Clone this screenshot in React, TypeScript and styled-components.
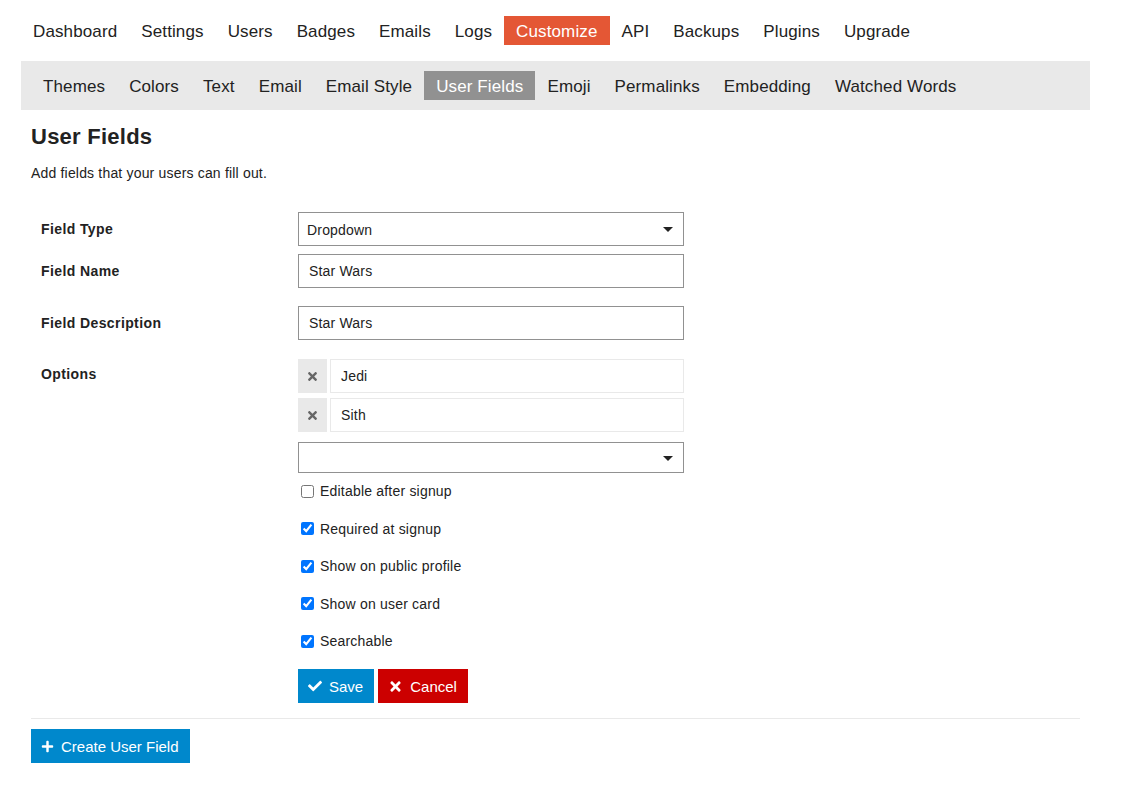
import { createGlobalStyle } from 'styled-components'
import styled from 'styled-components'
import { FaCheck, FaTimes, FaPlus } from 'react-icons/fa'

const GlobalStyle = createGlobalStyle`
  body {
    margin: 0;
    background: #fff;
    color: #222;
    font-family: "Liberation Sans", Arial, sans-serif;
  }
`

const Page = styled.div`
  width: 1069px;
  margin-left: 21px;
  padding-top: 16px;
`

const TopNav = styled.nav`
  display: flex;
`

const TopItem = styled.a<{ $active?: boolean }>`
  display: block;
  padding: 0 12px;
  height: 29px;
  line-height: 31px;
  font-size: 17px;
  letter-spacing: 0.12px;
  color: ${(p) => (p.$active ? '#fff' : '#222')};
  background: ${(p) => (p.$active ? '#e45735' : 'transparent')};
`

const SubNav = styled.nav`
  display: flex;
  margin-top: 16px;
  padding: 10px;
  background: #e9e9e9;
`

const SubItem = styled.a<{ $active?: boolean }>`
  display: block;
  padding: 0 12px;
  height: 29px;
  line-height: 31px;
  font-size: 17px;
  letter-spacing: 0.12px;
  color: ${(p) => (p.$active ? '#fff' : '#222')};
  background: ${(p) => (p.$active ? '#919191' : 'transparent')};
`

const Content = styled.main`
  padding: 0 10px;
`

const Title = styled.h1`
  margin: 12px 0 0;
  font-size: 22px;
  line-height: 29px;
  font-weight: bold;
  letter-spacing: 0.25px;
`

const Desc = styled.p`
  margin: 12px 0 0;
  font-size: 14px;
  line-height: 20px;
  letter-spacing: 0.18px;
`

const Form = styled.div`
  margin-top: 29px;
  padding-left: 10px;
`

const Row = styled.div<{ $gap: number }>`
  display: grid;
  grid-template-columns: 257px 386px;
  margin-top: ${(p) => p.$gap}px;
`

const Label = styled.div<{ $h?: number }>`
  font-size: 14px;
  font-weight: bold;
  letter-spacing: 0.4px;
  line-height: ${(p) => p.$h ?? 34}px;
`

const Controls = styled.div`
  display: flex;
  flex-direction: column;
`

const TextBox = styled.div<{ $light?: boolean }>`
  box-sizing: border-box;
  height: 34px;
  border: 1px solid ${(p) => (p.$light ? '#e9e9e9' : '#919191')};
  padding: 0 10px;
  font-size: 14px;
  letter-spacing: 0.18px;
  line-height: 33px;
  flex: 1;
`

const SelectBox = styled.div<{ $h: number; $top?: number }>`
  box-sizing: border-box;
  display: flex;
  align-items: center;
  justify-content: space-between;
  height: ${(p) => p.$h}px;
  margin-top: ${(p) => p.$top ?? 0}px;
  border: 1px solid #919191;
  padding: 1px 10px 0 8px;
  font-size: 14px;
  letter-spacing: 0.18px;
`

const Caret = styled.span`
  width: 0;
  height: 0;
  border-left: 5px solid transparent;
  border-right: 5px solid transparent;
  border-top: 5px solid #222;
`

const OptionRow = styled.div<{ $gap: number }>`
  display: flex;
  gap: 3px;
  margin-top: ${(p) => p.$gap}px;
`

const RemoveBtn = styled.div`
  width: 29px;
  height: 34px;
  display: flex;
  align-items: center;
  justify-content: center;
  background: #e9e9e9;
  color: #666;
  font-size: 13px;
`

const CheckList = styled.div`
  display: flex;
  flex-direction: column;
  gap: 17.5px;
  margin-top: 8px;
`

const CheckRow = styled.label`
  display: flex;
  align-items: center;
  height: 20px;
  font-size: 14px;
  letter-spacing: 0.2px;

  input {
    width: 13px;
    height: 13px;
    margin: 0 6px 0 3px;
  }
`

const Buttons = styled.div`
  display: flex;
  gap: 4px;
  margin-top: 18px;
`

const Button = styled.button<{ $color: string }>`
  display: flex;
  align-items: center;
  gap: 7px;
  height: 34px;
  padding: 0 11px 0 10px;
  border: none;
  background: ${(p) => p.$color};
  color: #fff;
  font-family: "Liberation Sans", Arial, sans-serif;
  font-size: 15px;
`

const Divider = styled.hr`
  border: none;
  border-top: 1px solid #e9e9e9;
  margin: 15px 0 10px;
`

const topItems = ['Dashboard', 'Settings', 'Users', 'Badges', 'Emails', 'Logs', 'Customize', 'API', 'Backups', 'Plugins', 'Upgrade']
const subItems = ['Themes', 'Colors', 'Text', 'Email', 'Email Style', 'User Fields', 'Emoji', 'Permalinks', 'Embedding', 'Watched Words']
const checks: [string, boolean][] = [
  ['Editable after signup', false],
  ['Required at signup', true],
  ['Show on public profile', true],
  ['Show on user card', true],
  ['Searchable', true],
]

export default function App() {
  return (
    <Page>
      <GlobalStyle />
      <TopNav>
        {topItems.map((t) => (
          <TopItem key={t} $active={t === 'Customize'}>{t}</TopItem>
        ))}
      </TopNav>
      <SubNav>
        {subItems.map((t) => (
          <SubItem key={t} $active={t === 'User Fields'}>{t}</SubItem>
        ))}
      </SubNav>
      <Content>
        <Title>User Fields</Title>
        <Desc>Add fields that your users can fill out.</Desc>
        <Form>
          <Row $gap={0}>
            <Label>Field Type</Label>
            <SelectBox $h={34}>
              Dropdown
              <Caret />
            </SelectBox>
          </Row>
          <Row $gap={8}>
            <Label>Field Name</Label>
            <TextBox>Star Wars</TextBox>
          </Row>
          <Row $gap={18}>
            <Label>Field Description</Label>
            <TextBox>Star Wars</TextBox>
          </Row>
          <Row $gap={19}>
            <Label $h={30}>Options</Label>
            <Controls>
              <OptionRow $gap={0}>
                <RemoveBtn><FaTimes /></RemoveBtn>
                <TextBox $light>Jedi</TextBox>
              </OptionRow>
              <OptionRow $gap={5}>
                <RemoveBtn><FaTimes /></RemoveBtn>
                <TextBox $light>Sith</TextBox>
              </OptionRow>
              <SelectBox $h={31} $top={10}>
                <span />
                <Caret />
              </SelectBox>
              <CheckList>
                {checks.map(([label, on]) => (
                  <CheckRow key={label}>
                    <input type="checkbox" defaultChecked={on} />
                    {label}
                  </CheckRow>
                ))}
              </CheckList>
              <Buttons>
                <Button $color="#0088cc"><FaCheck size={14} />Save</Button>
                <Button $color="#cc0000"><FaTimes size={15} />Cancel</Button>
              </Buttons>
            </Controls>
          </Row>
        </Form>
        <Divider />
        <Button $color="#0088cc"><FaPlus size={13} />Create User Field</Button>
      </Content>
    </Page>
  )
}
